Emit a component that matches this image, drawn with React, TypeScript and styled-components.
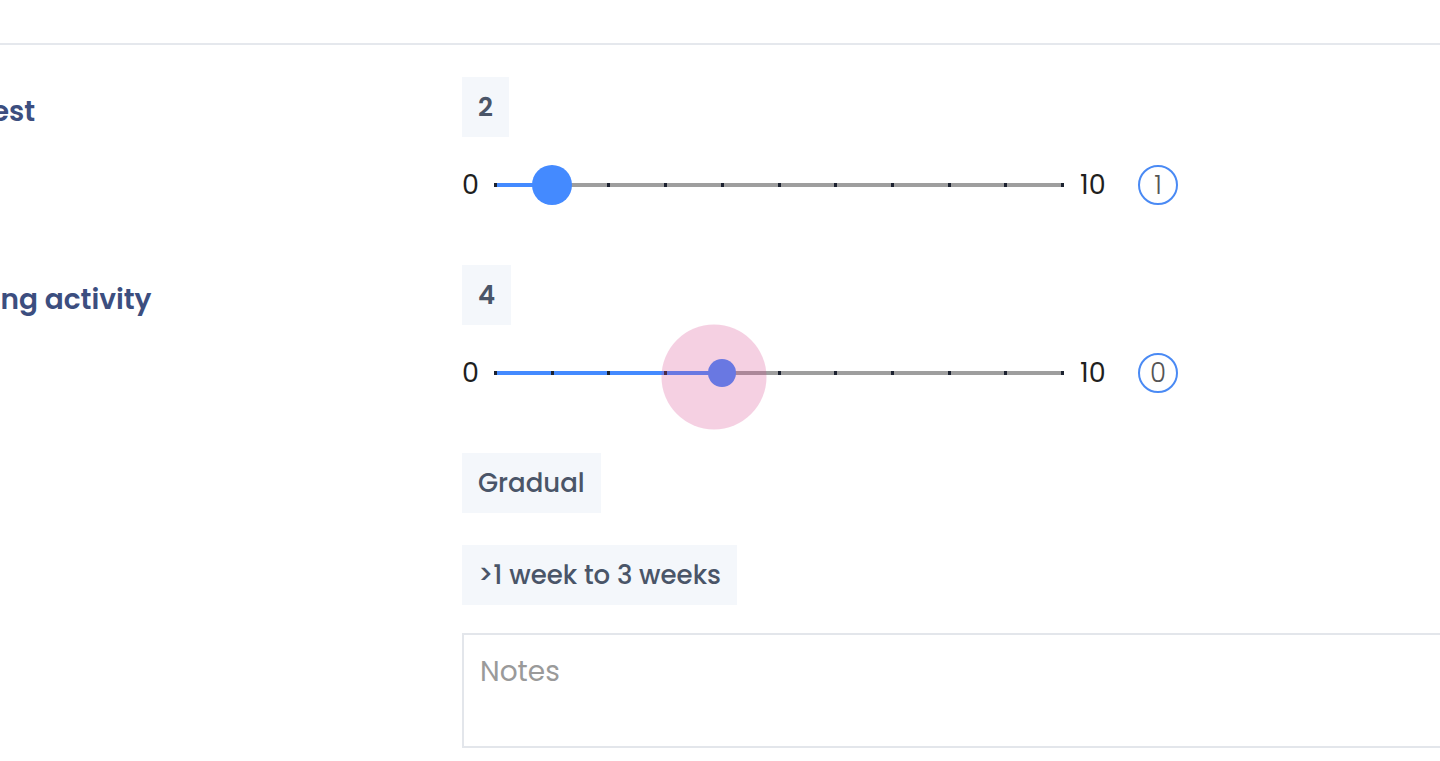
import React from "react";
import styled, { createGlobalStyle } from "styled-components";

const Global = createGlobalStyle`
  html, body { margin: 0; padding: 0; background: #ffffff; }
  body { font-family: Poppins, Inter, "Open Sans", sans-serif; }
  * { box-sizing: border-box; }
`;

const Page = styled.div`
  width: 1440px;
  height: 761px;
  overflow: hidden;
  background: #ffffff;
`;

const TopBar = styled.div`
  height: 45px;
  border-bottom: 2px solid #e5e8ed;
`;

const Form = styled.div`
  margin-left: -125px;
  padding-top: 32px;
  display: flex;
  flex-direction: column;
  gap: 60px;
`;

const Field = styled.div`
  display: grid;
  grid-template-columns: 587px 1fr;
`;

const Label = styled.div`
  font-size: 28px;
  font-weight: 600;
  color: #3c4e7f;
  line-height: 70px;
  white-space: nowrap;
`;

const Content = styled.div`
  display: flex;
  flex-direction: column;
  align-items: flex-start;
`;

const Chip = styled.div<{ $mt?: number; $weight?: number }>`
  height: 60px;
  padding: 0 16px;
  display: flex;
  align-items: center;
  background: #f4f7fb;
  color: #4a5568;
  font-size: 26px;
  font-weight: ${(p) => p.$weight ?? 500};
  margin-top: ${(p) => p.$mt ?? 0}px;
  white-space: nowrap;
`;

const SliderRow = styled.div`
  margin-top: 28px;
  height: 40px;
  display: flex;
  align-items: center;
`;

const EndLabel = styled.span<{ $w: number; $ml?: number; $mr?: number }>`
  width: ${(p) => p.$w}px;
  margin-left: ${(p) => p.$ml ?? 0}px;
  margin-right: ${(p) => p.$mr ?? 0}px;
  font-size: 27px;
  font-weight: 400;
  color: #1f1f1f;
  line-height: 40px;
  text-align: left;
`;

const Track = styled.div`
  position: relative;
  width: 567px;
  height: 4px;
  background: #9e9e9e;
`;

const Fill = styled.div`
  position: absolute;
  left: 0;
  top: 0;
  height: 4px;
  background: #448aff;
`;

const Tick = styled.span`
  position: absolute;
  top: 0;
  width: 3px;
  height: 4px;
  margin-left: -1px;
  background: #1c2230;
`;

const Thumb = styled.span<{ $size: number }>`
  position: absolute;
  top: 50%;
  width: ${(p) => p.$size}px;
  height: ${(p) => p.$size}px;
  border-radius: 50%;
  background: #448aff;
  transform: translate(-50%, -50%);
`;

const Halo = styled.span`
  position: absolute;
  top: 50%;
  width: 105px;
  height: 105px;
  border-radius: 50%;
  background: rgba(215, 67, 139, 0.25);
  transform: translate(calc(-50% - 8px), calc(-50% + 4px));
  pointer-events: none;
`;

const Badge = styled.span`
  margin-left: 32px;
  width: 40px;
  height: 40px;
  border-radius: 50%;
  border: 2px solid #4a8af4;
  display: flex;
  align-items: center;
  justify-content: center;
  font-size: 26px;
  font-weight: 300;
  color: #555;
`;

const Notes = styled.textarea`
  margin-top: 28px;
  width: 1100px;
  height: 115px;
  border: 2px solid #e3e6eb;
  border-radius: 0;
  padding: 16px 16px;
  font-family: Poppins, Inter, "Open Sans", sans-serif;
  font-size: 28px;
  color: #333;
  resize: none;
  outline: none;
  &::placeholder { color: #9a9a9a; }
`;

type SliderProps = { value: number; big?: boolean; active?: boolean; badge: string };

function Slider({ value, big, active, badge }: SliderProps) {
  const pct = (value / 10) * 100;
  return (
    <SliderRow>
      <EndLabel $w={17} $mr={16}>0</EndLabel>
      <Track>
        <Fill style={{ width: `${pct}%` }} />
        {Array.from({ length: 11 }).map((_, i) => (
          <Tick key={i} style={{ left: `${i * 10}%` }} />
        ))}
        <Thumb $size={big ? 40 : 28} style={{ left: `${pct}%` }} />
        {active && <Halo style={{ left: `${pct}%` }} />}
      </Track>
      <EndLabel $w={26} $ml={18}>10</EndLabel>
      <Badge>{badge}</Badge>
    </SliderRow>
  );
}

export default function App() {
  return (
    <>
      <Global />
      <Page>
        <TopBar />
        <Form>
          <Field>
            <Label>Pain at rest</Label>
            <Content>
              <Chip $weight={600}>2</Chip>
              <Slider value={1} big badge="1" />
            </Content>
          </Field>
          <Field>
            <Label>Pain during activity</Label>
            <Content>
              <Chip $weight={600}>4</Chip>
              <Slider value={4} active badge="0" />
              <Chip $mt={60}>Gradual</Chip>
              <Chip $mt={32}>&gt;1 week to 3 weeks</Chip>
              <Notes placeholder="Notes" />
            </Content>
          </Field>
        </Form>
      </Page>
    </>
  );
}
